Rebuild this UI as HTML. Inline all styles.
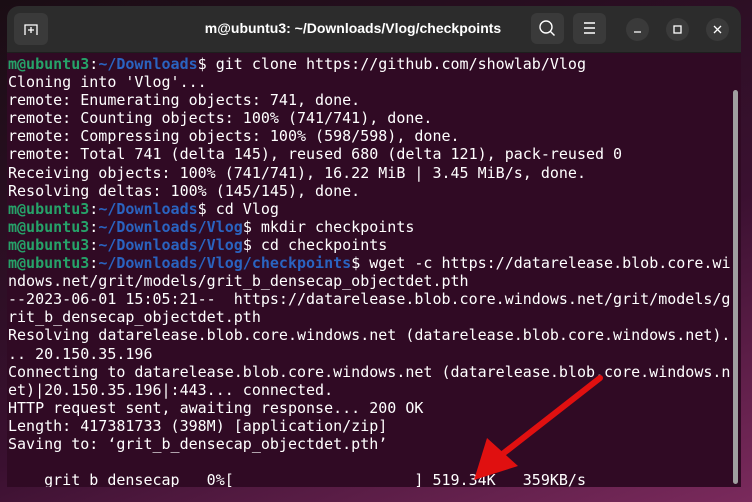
<!DOCTYPE html>
<html><head><style>
body{margin:0;width:752px;height:502px;overflow:hidden;background:linear-gradient(160deg,#1a0d14 0%,#3a1030 60%,#7a2a5c 100%);position:relative;font-family:"DejaVu Sans Mono",monospace}
.win{position:absolute;left:7px;top:6px;width:734px;height:481px;background:#300a24;border-radius:12px 12px 0 0;overflow:hidden}
.hdr{height:46px;background:#2c2c2c;position:relative;border-bottom:1px solid #1e1e1e}
.title{position:absolute;left:187px;width:318px;top:14px;text-align:center;color:#fff;font:bold 14px "Liberation Sans",sans-serif;white-space:nowrap}
.btn{position:absolute;top:7px;width:33px;height:31px;background:#3a3a3a;border-radius:6px}
.cb{position:absolute;top:12px;width:23px;height:23px;background:#3a3a3a;border-radius:50%}
pre{margin:0;position:absolute;left:1px;top:49px;color:#fff;font:15px/18.1px "DejaVu Sans Mono",monospace}
.g{color:#26a269;font-weight:bold}.b{color:#2a63c0;font-weight:bold}
.sb{position:absolute;left:726px;top:84px;width:5px;height:394px;background:#a0a0a0;border-radius:3px}
</style></head><body>
<div class="win">
<div class="hdr">
<div class="btn" style="left:7px;width:34px;height:32px"><svg width="34" height="32"><path d="M11 22V12h12v10M17 14v6M14 17h6" stroke="#fff" fill="none" stroke-width="1.3"/></svg></div>
<div class="title">m@ubuntu3: ~/Downloads/Vlog/checkpoints</div>
<div class="btn" style="left:524px"><svg width="33" height="31"><circle cx="15" cy="14" r="6" stroke="#fff" fill="none" stroke-width="1.4"/><path d="M19.5 18.5l4 4" stroke="#fff" stroke-width="1.4"/></svg></div>
<div class="btn" style="left:566px"><svg width="33" height="31"><path d="M11 10h11M11 15h11M11 20h11" stroke="#fff" stroke-width="1.4"/></svg></div>
<div class="cb" style="left:619px"><svg width="23" height="23"><path d="M8 14h7" stroke="#fff" stroke-width="1.3"/></svg></div>
<div class="cb" style="left:659px"><svg width="23" height="23"><rect x="8" y="8" width="7" height="7" stroke="#fff" fill="none" stroke-width="1.3"/></svg></div>
<div class="cb" style="left:699px"><svg width="23" height="23"><path d="M8 8l7 7M15 8l-7 7" stroke="#fff" stroke-width="1.3"/></svg></div>
</div>
<pre><span class="g">m@ubuntu3</span>:<span class="b">~/Downloads</span>$ git clone https://github.com/showlab/Vlog
Cloning into 'Vlog'...
remote: Enumerating objects: 741, done.
remote: Counting objects: 100% (741/741), done.
remote: Compressing objects: 100% (598/598), done.
remote: Total 741 (delta 145), reused 680 (delta 121), pack-reused 0
Receiving objects: 100% (741/741), 16.22 MiB | 3.45 MiB/s, done.
Resolving deltas: 100% (145/145), done.
<span class="g">m@ubuntu3</span>:<span class="b">~/Downloads</span>$ cd Vlog
<span class="g">m@ubuntu3</span>:<span class="b">~/Downloads/Vlog</span>$ mkdir checkpoints
<span class="g">m@ubuntu3</span>:<span class="b">~/Downloads/Vlog</span>$ cd checkpoints
<span class="g">m@ubuntu3</span>:<span class="b">~/Downloads/Vlog/checkpoints</span>$ wget -c https://datarelease.blob.core.wi
ndows.net/grit/models/grit_b_densecap_objectdet.pth
--2023-06-01 15:05:21--  https://datarelease.blob.core.windows.net/grit/models/g
rit_b_densecap_objectdet.pth
Resolving datarelease.blob.core.windows.net (datarelease.blob.core.windows.net).
.. 20.150.35.196
Connecting to datarelease.blob.core.windows.net (datarelease.blob.core.windows.n
et)|20.150.35.196|:443... connected.
HTTP request sent, awaiting response... 200 OK
Length: 417381733 (398M) [application/zip]
Saving to: ‘grit_b_densecap_objectdet.pth’

    grit_b_densecap   0%[                    ] 519.34K   359KB/s</pre>
<div class="sb"></div>
</div>
<svg style="position:absolute;left:0;top:0" width="752" height="502"><path d="M600 378L500 456" stroke="#e01010" stroke-width="6" stroke-linecap="round"/><path d="M474 480L487 438L518 466Z" fill="#e01010"/></svg>
</body></html>
